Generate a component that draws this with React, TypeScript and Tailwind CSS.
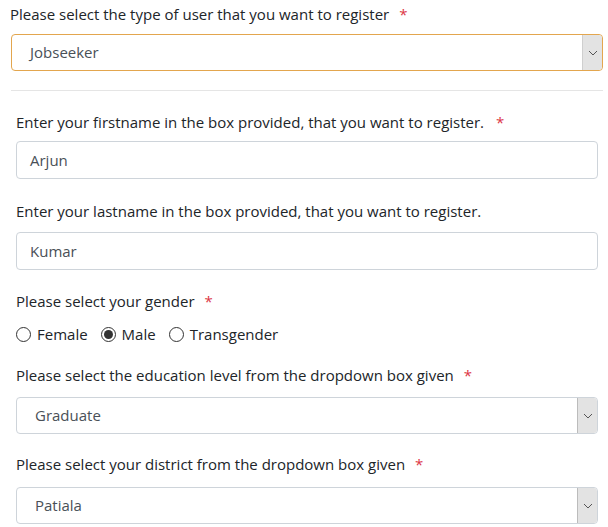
import { ReactNode } from "react";

const font = { fontFamily: '"Open Sans", "Noto Sans", sans-serif' };

function Star() {
  return <span className="ml-2.5 text-[#dc3545]">*</span>;
}

function Chevron() {
  return (
    <svg width="10" height="6" viewBox="0 0 10 6" fill="none">
      <path d="M1 1l4 4 4-4" stroke="#555" strokeWidth="1" />
    </svg>
  );
}

function FakeSelect({ value, wide }: { value: string; wide?: boolean }) {
  return (
    <div
      className={`flex h-[37px] items-stretch overflow-hidden rounded-[4px] border bg-white ${
        wide ? "border-[#e3a64e]" : "border-[#ced4da]"
      }`}
    >
      <div className="flex flex-1 items-center pl-[18px] text-[#495057]">{value}</div>
      <div
        className={`flex w-[20px] items-center justify-center rounded-r-[3px] border-l bg-[#e3e3e3] ${
          wide ? "border-[#cfcfcf]" : "border-[#bcbcbc]"
        }`}
      >
        <Chevron />
      </div>
    </div>
  );
}

function TextInput({ value }: { value: string }) {
  return (
    <div className="flex h-[38px] items-center rounded-[4px] border border-[#ced4da] bg-white pl-[13px] text-[#495057]">
      {value}
    </div>
  );
}

function Label({ children }: { children: ReactNode }) {
  return <p className="leading-[22px] text-[#212529]">{children}</p>;
}

function Radio({ checked, label }: { checked?: boolean; label: string }) {
  return (
    <label className="flex items-center gap-[6px]">
      <span className="flex h-[15px] w-[15px] items-center justify-center rounded-full border border-[#333] bg-white">
        {checked && <span className="h-[9px] w-[9px] rounded-full bg-[#333]" />}
      </span>
      <span>{label}</span>
    </label>
  );
}

export default function App() {
  return (
    <div className="min-h-[527px] w-[608px] bg-white text-[15px] text-[#212529]" style={font}>
      <div className="pl-[10px] pr-[5px] pt-[3px]">
        <Label>
          Please select the type of user that you want to register
          <Star />
        </Label>
        <div className="ml-px mt-[9px]">
          <FakeSelect value="Jobseeker" wide />
        </div>
        <div className="ml-px mr-0 mt-[19px] h-px bg-[#e5e5e5]" />
      </div>

      <div className="pl-[16px] pr-[10px]">
        <div className="mt-[20px]">
          <Label>
            Enter your firstname in the box provided, that you want to register.
            <span className="ml-3 text-[#dc3545]">*</span>
          </Label>
          <div className="mt-[8px]">
            <TextInput value="Arjun" />
          </div>
        </div>

        <div className="mt-[21px]">
          <Label>Enter your lastname in the box provided, that you want to register.</Label>
          <div className="mt-[10px]">
            <TextInput value="Kumar" />
          </div>
        </div>

        <div className="mt-[20px]">
          <Label>
            Please select your gender
            <Star />
          </Label>
          <div className="mt-[11px] flex items-center gap-[13px] leading-[22px]">
            <Radio label="Female" />
            <Radio checked label="Male" />
            <Radio label="Transgender" />
          </div>
        </div>

        <div className="mt-[19px]">
          <Label>
            Please select the education level from the dropdown box given
            <Star />
          </Label>
          <div className="mt-[11px]">
            <FakeSelect value="Graduate" />
          </div>
        </div>

        <div className="mt-[19px]">
          <Label>
            Please select your district from the dropdown box given
            <Star />
          </Label>
          <div className="mt-[12px]">
            <FakeSelect value="Patiala" />
          </div>
        </div>
      </div>
    </div>
  );
}
